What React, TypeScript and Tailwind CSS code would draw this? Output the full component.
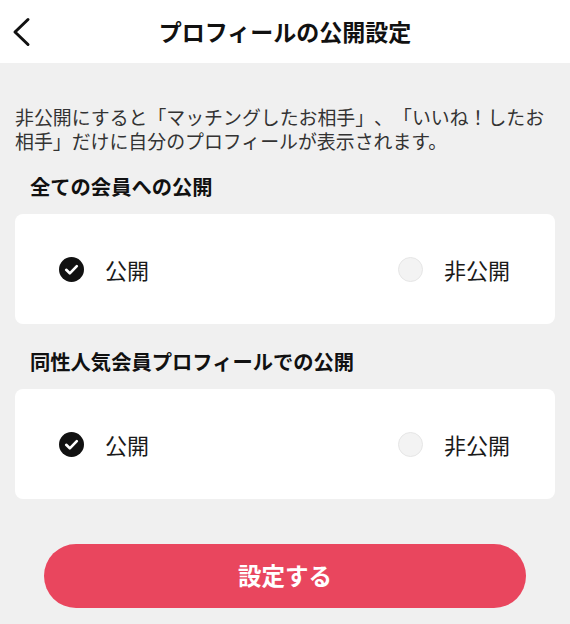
import React from 'react';

const font = { fontFamily: '"Noto Sans CJK JP", "Noto Sans", sans-serif' };

function Checked() {
  return (
    <svg width="25" height="25" viewBox="0 0 25 25">
      <circle cx="12.5" cy="12.5" r="12.5" fill="#111" />
      <path d="M7.2 12.8l3.6 3.5 7-7.2" fill="none" stroke="#fff" strokeWidth="2.6" strokeLinecap="round" strokeLinejoin="round" />
    </svg>
  );
}

function Unchecked() {
  return <span className="block w-[25px] h-[25px] rounded-full bg-[#f3f3f3] border border-[#e6e6e6]" />;
}

function Option({ label, checked }: { label: string; checked: boolean }) {
  return (
    <div className="flex items-center gap-[21px]">
      {checked ? <Checked /> : <Unchecked />}
      <span className="text-[22px] leading-none text-[#1a1a1a]">{label}</span>
    </div>
  );
}

function Section({ title }: { title: string }) {
  return (
    <div>
      <h2 className="pl-[15px] text-[20.3px] font-bold leading-[28px] text-[#111]">{title}</h2>
      <div className="mt-[14px] h-[110px] rounded-lg bg-white flex items-center justify-between pl-[44px] pr-[45px]">
        <Option label="公開" checked />
        <Option label="非公開" checked={false} />
      </div>
    </div>
  );
}

export default function App() {
  return (
    <div className="w-[570px] h-[624px] bg-[#f0f0f0] overflow-hidden [text-spacing-trim:space-all]" style={font}>
      <header className="relative h-[63px] bg-white flex items-center justify-center">
        <button className="absolute left-[11px] top-[16px]">
          <svg width="22" height="32" viewBox="0 0 22 32">
            <path d="M17 3.5L4 16l13 12.5" fill="none" stroke="#111" strokeWidth="3" strokeLinecap="round" strokeLinejoin="round" />
          </svg>
        </button>
        <h1 className="text-[23px] font-bold text-[#111] leading-none">プロフィールの公開設定</h1>
      </header>

      <div className="px-[15px] pt-[42px]">
        <p className="text-[18.9px] leading-[24px] text-[#333]">
          非公開にすると「マッチングしたお相手」、「いいね！したお相手」だけに自分のプロフィールが表示されます。
        </p>
        <div className="mt-[19px]">
          <Section title="全ての会員への公開" />
        </div>
        <div className="mt-[23px]">
          <Section title="同性人気会員プロフィールでの公開" />
        </div>
        <div className="mt-[45px] px-[29px]">
          <button className="w-full h-[64px] rounded-full bg-[#e9465e] text-white text-[23.5px] font-bold">
            設定する
          </button>
        </div>
      </div>
    </div>
  );
}
